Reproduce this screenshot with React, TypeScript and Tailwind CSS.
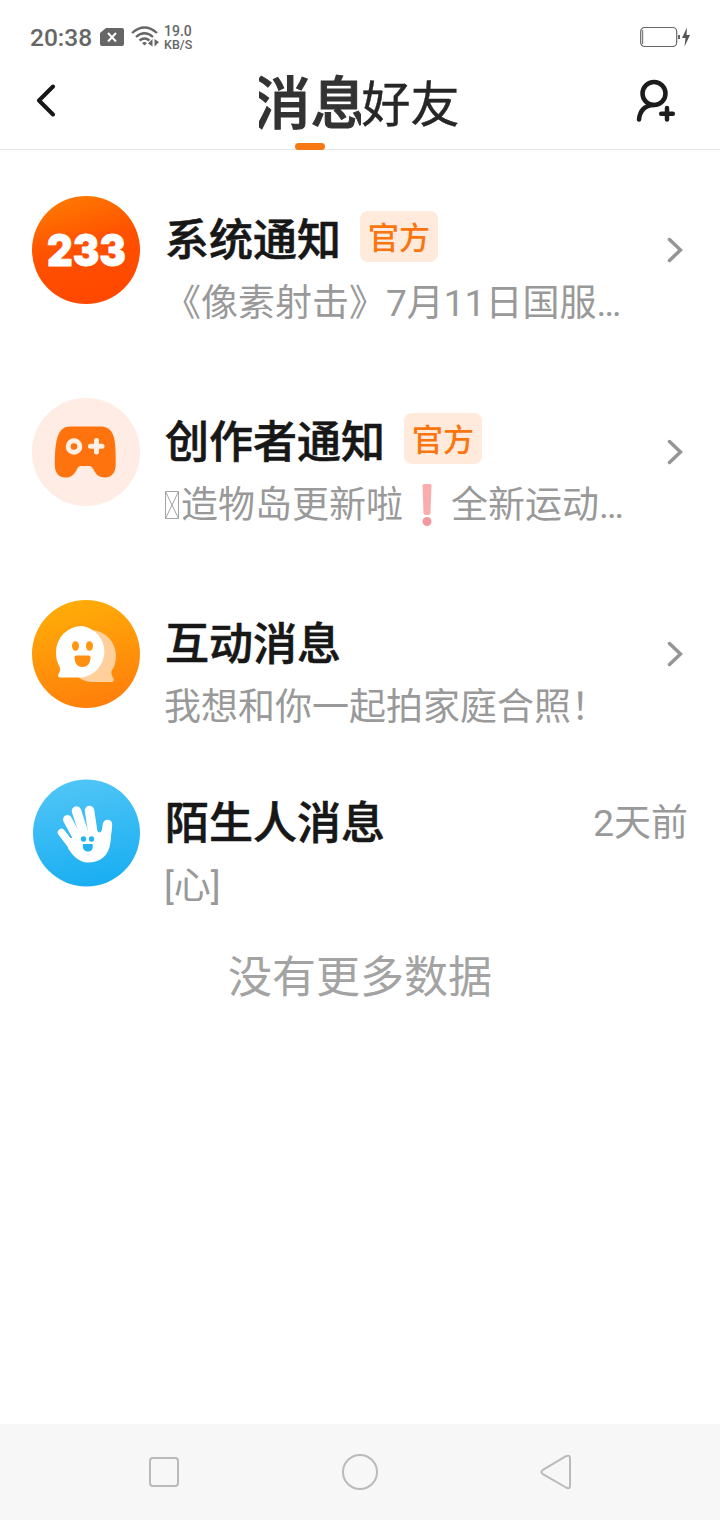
import type { ReactNode } from "react";
import clsx from "clsx";

interface Mensaje {
  id: string;
  titulo: string;
  oficial?: boolean;
  resumen: ReactNode;
  avatar: ReactNode;
  hora?: string;
  className: string;
}

const SystemAvatar = () => (
  <svg viewBox="0 0 108 108" className="size-[108px]">
    <defs>
      <linearGradient id="system" x1="0.2" y1="0" x2="0.5" y2="1">
        <stop offset="0" stopColor="#ff7c00" />
        <stop offset="0.5" stopColor="#ff5000" />
        <stop offset="1" stopColor="#ff4800" />
      </linearGradient>
    </defs>
    <circle cx="54" cy="54" r="54" fill="url(#system)" />
    <text
      x="15"
      y="70"
      textLength="79"
      lengthAdjust="spacingAndGlyphs"
      fill="#fff"
      stroke="#fff"
      strokeWidth="0.8"
      className="font-['Inter',sans-serif] text-[43.500px] font-black"
    >
      233
    </text>
  </svg>
);

const CreatorAvatar = () => (
  <svg viewBox="0 0 108 108" className="size-[108px]">
    <circle cx="54" cy="54" r="54" fill="#ffece4" />
    <path
      d="M38 28.500H69C78 28.500 81.500 35 82.700 43C83.600 50 83.800 57 83.700 67C83.600 75 79 79.500 73 79.500C67 79.500 64 76.500 61.500 71.500C60.300 69 59 68 57 68H49C47 68 46 69 44.800 71.500C42 77 39 79.500 33.500 79.500C27 79.500 22.800 75 22.800 67C22.800 58 23 50 24.500 43C26.500 34 30 28.500 38 28.500Z"
      fill="#ff730f"
    />
    <circle cx="42" cy="48.500" r="5.800" fill="none" stroke="#fff0e6" strokeWidth="5" />
    <path d="M64.500 42.500V54M58.500 48.200H70" stroke="#fff0e6" strokeWidth="5" strokeLinecap="round" />
  </svg>
);

const InteractionAvatar = () => (
  <svg viewBox="0 0 108 108" className="size-[108px]">
    <defs>
      <linearGradient id="interaction" x1="0.35" y1="0" x2="0.6" y2="1">
        <stop offset="0" stopColor="#ffad08" />
        <stop offset="1" stopColor="#ff7e0b" />
      </linearGradient>
    </defs>
    <circle cx="54" cy="54" r="54" fill="url(#interaction)" />
    <path
      d="M58 30C73 30 84 42 84 56C84 62 82.500 67 79.500 71C79 74 80 76 81.500 78.500C82.500 80.500 81.500 82 79.500 82H60C53 82 48 79 44 75Z"
      fill="#ffcf9c"
    />
    <path
      d="M50 26A26 26 0 0 1 50 77.500H28.500C26.300 77.500 25.300 76 26.500 74C28 71.500 28.500 70 27.700 67C25 62.500 24 58 24 52A26 26 0 0 1 50 26Z"
      fill="#fff"
    />
    <ellipse cx="43.500" cy="46" rx="3.500" ry="4.800" fill="#ff9710" />
    <ellipse cx="57.500" cy="46" rx="3.500" ry="4.800" fill="#ff9710" />
    <path d="M44.500 55.500H56.500C58 55.500 58.700 56.500 58.500 58C58 64 55 67 50.500 67C46 67 43 64 42.500 58C42.400 56.500 43 55.500 44.500 55.500Z" fill="#ff8f10" />
  </svg>
);

const StrangerAvatar = () => (
  <svg viewBox="0 0 108 108" className="size-[108px]">
    <defs>
      <linearGradient id="stranger" x1="0.4" y1="0" x2="0.6" y2="1">
        <stop offset="0" stopColor="#50c5f6" />
        <stop offset="1" stopColor="#18aef2" />
      </linearGradient>
    </defs>
    <circle cx="54.500" cy="54" r="53.500" fill="url(#stranger)" />
    <g stroke="#fff" strokeLinecap="round" fill="none">
      <path d="M29.500 53.500L42 70" strokeWidth="7.500" />
      <path d="M35.500 40.500L47 62" strokeWidth="9" />
      <path d="M44.500 32L53 58" strokeWidth="9.500" />
      <path d="M57.500 31.500L61.500 58" strokeWidth="9.500" />
      <path d="M75.500 45.500L73 64" strokeWidth="9.500" />
    </g>
    <path
      d="M36 59L40 59L48 53L57 52L65 52C68 55 70 53 71 47L80 46L78.500 63C77 77 68 83.500 56 83.500C47 83.500 40 76 36 69Z"
      fill="#fff"
    />
    <circle cx="51.500" cy="60" r="2.700" fill="#25b2f2" />
    <circle cx="59.500" cy="60" r="2.700" fill="#25b2f2" />
    <path d="M51 65H60.500C61.500 70 59.500 72.500 56 72.500C52.500 72.500 50 70 51 65Z" fill="#25b2f2" />
  </svg>
);

const MissingGlyph = () => (
  <svg viewBox="0 0 17 30" className="inline-block h-[30px] w-[17px] align-[-2px]" fill="none" stroke="#a3a3a3">
    <path d="M1.500 1.500H14.500V28.500H1.500ZM1.500 1.500L14.500 28.500M14.500 1.500L1.500 28.500" />
  </svg>
);

const ExclamationEmoji = () => (
  <svg viewBox="0 0 48 42" className="inline-block h-[42px] w-[48px] align-[-8px]">
    <path d="M19.500 1.500Q19.500 0 21 0H27Q28.500 0 28.500 1.500L27.500 29Q27.400 31 25.500 31H22.500Q20.600 31 20.500 29Z" fill="#f9adad" />
    <circle cx="24" cy="37.500" r="4.500" fill="#f09a9f" />
  </svg>
);

const mensajes: Mensaje[] = [
  {
    id: "system",
    titulo: "系统通知",
    oficial: true,
    resumen: "《像素射击》7月11日国服…",
    avatar: <SystemAvatar />,
    className: "h-[202px]",
  },
  {
    id: "creator",
    titulo: "创作者通知",
    oficial: true,
    resumen: (
      <>
        <MissingGlyph />
        造物岛更新啦
        <ExclamationEmoji />
        全新运动…
      </>
    ),
    avatar: <CreatorAvatar />,
    className: "h-[202px]",
  },
  {
    id: "interaction",
    titulo: "互动消息",
    resumen: "我想和你一起拍家庭合照！",
    avatar: <InteractionAvatar />,
    className: "h-[179px]",
  },
  {
    id: "stranger",
    titulo: "陌生人消息",
    resumen: "[心]",
    avatar: <StrangerAvatar />,
    hora: "2天前",
    className: "h-[190px]",
  },
];

const StatusBar = () => (
  <div className="flex h-[74px] items-center justify-between pr-[29px] pl-[30px] text-[#666]">
    <div className="flex items-center">
      <span className="w-[70px] pt-0.5 text-[24.5px] font-medium">20:38</span>
      <svg viewBox="0 0 24 18" className="h-[18px] w-6">
        <path d="M6 0H22Q24 0 24 2V16Q24 18 22 18H2Q0 18 0 16V5Z" fill="#666" />
        <path d="M8 5L16 13.500M16 5L8 13.500" stroke="#fff" strokeWidth="2" />
      </svg>
      <svg viewBox="0 0 28 22" className="ml-[7px] h-[22px] w-7" fill="none" stroke="#666" strokeWidth="2.300">
        <path d="M1 7Q13.500 -4 26 7M5 11Q13.500 3.500 22 11M8.500 14.500Q13.500 10.500 18.500 14.500" />
        <path d="M11 17Q13.500 15 16 17L13.500 19.500Z" fill="#666" stroke="none" />
        <path d="M21.500 13V20.500L17 17.500ZM23.500 20.500V13L28 16Z" fill="#666" stroke="none" />
      </svg>
      <div className="ml-[5px] pt-px text-[12.500px] leading-[13px] font-medium">
        <div className="text-[14px]">19.0</div>
        <div>KB/S</div>
      </div>
    </div>
    <svg viewBox="0 0 51 22" className="h-[22px] w-[51px]">
      <rect x="0.700" y="1.500" width="36" height="19" rx="4" fill="none" stroke="#666" strokeWidth="1.200" />
      <path d="M2.700 4V18" stroke="#666" />
      <path d="M38 9H40V13H38Z" fill="#666" />
      <path d="M47 1.500L42 12H45.500L44.500 20.500L50 9H46.500Z" fill="#555" />
    </svg>
  </div>
);

const Header = () => (
  <header className="flex h-[76px] items-start justify-between border-b border-[#e4e4e4] pr-[43px] pl-9">
    <button className="mt-[9px]">
      <svg viewBox="0 0 20 34" className="h-[34px] w-5" fill="none" stroke="#171717" strokeWidth="4" strokeLinecap="round" strokeLinejoin="round">
        <path d="M17 3.500L3 17.500L17 31.500" />
      </svg>
    </button>
    <nav className="ml-7 flex h-[76px] text-[#262626]">
      <div className="relative flex w-[102px] justify-center overflow-hidden">
        <span className="shrink-0 text-[57px] leading-[62px] font-medium text-[#333] [-webkit-text-stroke:1px]">消息</span>
        <span className="absolute bottom-0 left-9 h-[7px] w-[30px] rounded-full bg-[#f87814]" />
      </div>
      <span className="text-[49px] leading-[64px] [-webkit-text-stroke:0.4px]">好友</span>
    </nav>
    <button className="mt-[5px]">
      <svg viewBox="0 0 42 44" className="h-11 w-[42px]" fill="none" stroke="#1c1c1c" strokeWidth="4.500" strokeLinecap="round">
        <circle cx="19" cy="14.500" r="11.500" />
        <path d="M4 40.500C5 31 10.500 26.500 18.500 26" />
        <path d="M32 29V40.500M26.200 34.800H37.800" />
      </svg>
    </button>
  </header>
);

const MessageRow = ({ mensaje }: { mensaje: Mensaje }) => (
  <li className={clsx("flex items-start px-8 pt-[46px]", mensaje.className)}>
    {mensaje.avatar}
    <div className="ml-6 min-w-0 flex-1 pt-[7px]">
      <div className="flex h-[66px] items-center">
        <h2 className="pt-2.5 pl-px text-[44px] font-medium text-[#171717] [-webkit-text-stroke:0.6px]">{mensaje.titulo}</h2>
        {mensaje.oficial && (
          <span className="ml-[19px] flex h-[51px] w-[78px] items-center justify-center rounded-lg bg-[#ffeadb] pt-[7px] text-[31px] font-medium text-[#fa7510]">
            官方
          </span>
        )}
      </div>
      <p className="mt-[3px] h-[64px] text-[37px] leading-[64px] whitespace-nowrap text-[#999]">{mensaje.resumen}</p>
    </div>
    {mensaje.hora ? (
      <span className="h-[90px] text-[37px] leading-[90px] text-[#999]">{mensaje.hora}</span>
    ) : (
      <svg viewBox="0 0 16 26" className="mt-[41px] mr-[5px] h-[26px] w-4" fill="none" stroke="#959595" strokeWidth="3.500" strokeLinecap="round">
        <path d="M2.500 2.500L13.500 13L2.500 23.500" />
      </svg>
    )}
  </li>
);

const NavigationBar = () => (
  <footer className="flex h-24 items-center justify-between bg-[#f7f7f7] pr-[148px] pl-[149px]">
    <span className="size-[30px] rounded-[4px] border-2 border-[#bababa]" />
    <span className="size-9 rounded-full border-2 border-[#bababa]" />
    <svg viewBox="0 0 32 36" className="h-9 w-8" fill="none" stroke="#bababa" strokeWidth="2" strokeLinejoin="round">
      <path d="M2.500 16.200L26 2.200Q30 0.500 30 4V32Q30 35.500 26 33.500L2.500 19.800Q0.500 18 2.500 16.200Z" />
    </svg>
  </footer>
);

const App = () => {
  return (
    <div className="flex h-[1520px] w-[720px] flex-col overflow-hidden bg-white font-[Roboto,'Noto_Sans_CJK_SC',sans-serif]" lang="zh-CN">
      <StatusBar />
      <Header />
      <main className="flex-1">
        <ul>
          {mensajes.map((mensaje) => (
            <MessageRow key={mensaje.id} mensaje={mensaje} />
          ))}
        </ul>
        <p className="mt-[23px] text-center text-[44px] leading-[64px] text-[#a3a3a3]">没有更多数据</p>
      </main>
      <NavigationBar />
    </div>
  );
};

export default App;
